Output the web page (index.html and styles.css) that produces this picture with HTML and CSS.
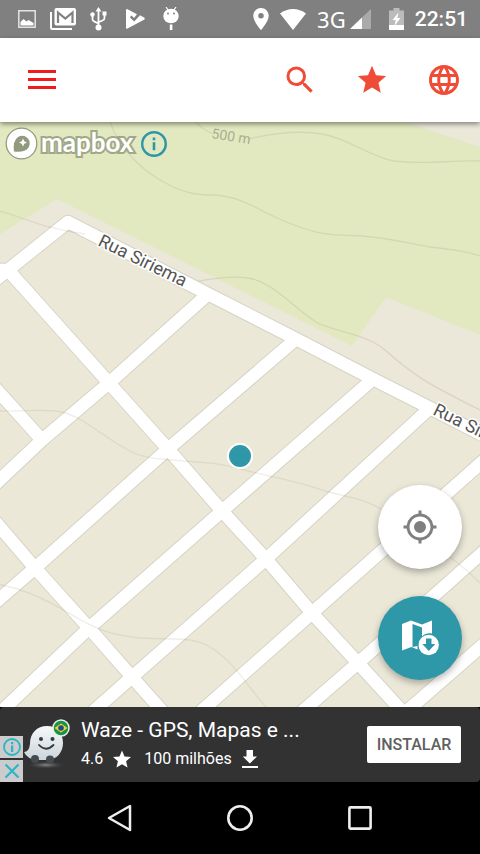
FILE: index.html
```html
<!DOCTYPE html>
<html lang="pt-BR">
<head>
<meta charset="utf-8">
<meta name="viewport" content="width=device-width, initial-scale=1">
<title>Mapa</title>
<link rel="stylesheet" href="styles.css">
</head>
<body>
<div class="status">
  <div class="status-left">
    <span class="slot"><svg width="18" height="18" viewBox="0 0 18 18"><path d="M.8.8h16.4v16.4H.8z" fill="none" stroke="#e4e4e4" stroke-width="1.5"/><path d="M2.500 15.500v-3.500l3-3 3 2.500 2-1.500 5 3v2.500z" fill="#fff"/></svg></span>
    <span class="slot"><svg width="26" height="22" viewBox="0 0 26 22"><path d="M1 4v15.500q0 1.500 1.500 1.500H22" fill="none" stroke="#fff" stroke-width="2"/><rect x="4.500" width="21.500" height="17.500" rx="2" fill="#fff"/><path d="M8 15V4.500l7.300 6 7.200-6V15" fill="none" stroke="#808080" stroke-width="2.200"/></svg></span>
    <span class="slot"><svg width="18" height="24" viewBox="0 0 18 24"><path d="M8.500 3v17M2.500 9v3q0 2 2 2.700l4 1.800M14.500 8v3q0 2-2 2.500l-4 1.800" fill="none" stroke="#fff" stroke-width="1.800"/><path d="M8.500 0l3 4.500h-6zM12.500 4.500h4v4h-4z" fill="#fff"/><circle cx="2.500" cy="7.500" r="2.200" fill="#fff"/><circle cx="8.500" cy="20.500" r="3" fill="#fff"/></svg></span>
    <span class="slot"><svg width="19" height="20" viewBox="0 0 19 20"><path d="M0 1q0-1.500 1.500-.7L11 5.200 8 9 5.500 6.500 3.800 8.200 8.200 12.600 14 6.300 18 8.500q1.600 1.200 0 2.200L1.500 19.500Q0 20.200 0 19z" fill="#fff"/></svg></span>
    <span class="slot"><svg width="16" height="24" viewBox="0 0 16 24"><path d="M3 0l2 3M13 0l-2 3" stroke="#fff" stroke-width="1.200"/><ellipse cx="8" cy="9" rx="7.700" ry="7.300" fill="#fff"/><path d="M6.800 17.500h2.600V23H6.800z" fill="#fff"/><circle cx="5" cy="6.500" r=".9" fill="#777"/><circle cx="11" cy="6.500" r=".9" fill="#777"/></svg></span>
  </div>
  <div class="status-right">
    <svg width="16" height="22" viewBox="5 2 14 20"><path fill="#fff" d="M12 2C8.130 2 5 5.130 5 9c0 5.250 7 13 7 13s7-7.750 7-13c0-3.870-3.130-7-7-7zm0 9.500a2.500 2.500 0 1 1 0-5 2.500 2.500 0 0 1 0 5z"/></svg>
    <svg width="26" height="21" viewBox="0 0 26 21"><path fill="#fff" d="M0 4.500Q6 0 13 0t13 4.500L13 21z"/></svg>
    <span class="net"><span>3G</span><svg width="21" height="20" viewBox="0 0 21 20"><path d="M21 0v20H0z" fill="#aaa"/><path d="M12 8.600V20H0z" fill="#fff"/></svg></span>
    <svg class="battery" width="15" height="22" viewBox="0 0 15 22"><path d="M4.500 0h6v2.500H15V22H0V2.500h4.500z" fill="#bbb"/><path d="M0 17h15v5H0z" fill="#fff"/><path d="M9.500 4.500L3.500 12h3.200L5.500 18l6-8H8.300z" fill="#fff"/></svg>
    <time>22:51</time>
  </div>
</div>

<header class="toolbar">
  <button class="menu" aria-label="Menu"><i></i><i></i><i></i></button>
  <div class="actions">
    <button aria-label="Buscar"><svg width="36" height="36" viewBox="0 0 24 24"><path d="M15.500 14h-.79l-.28-.27A6.471 6.471 0 0 0 16 9.500 6.500 6.500 0 1 0 9.500 16c1.610 0 3.090-.59 4.230-1.570l.27.280v.79l5 4.990L20.490 19l-4.990-5zm-6 0C7.010 14 5 11.990 5 9.500S7.010 5 9.500 5 14 7.010 14 9.500 11.990 14 9.500 14z"/></svg></button>
    <button aria-label="Favoritos"><svg width="34" height="34" viewBox="0 0 24 24"><path d="M12 17.270L18.180 21l-1.640-7.030L22 9.240l-7.190-.61L12 2 9.190 8.630 2 9.240l5.460 4.730L5.820 21z"/></svg></button>
    <button aria-label="Idioma"><svg width="36" height="36" viewBox="0 0 24 24"><path d="M11.990 2C6.470 2 2 6.480 2 12s4.470 10 9.990 10C17.520 22 22 17.520 22 12S17.520 2 11.990 2zm6.930 6h-2.950a15.650 15.650 0 0 0-1.380-3.560A8.030 8.030 0 0 1 18.920 8zM12 4.040c.83 1.200 1.480 2.530 1.910 3.960h-3.820c.43-1.430 1.080-2.760 1.910-3.960zM4.260 14C4.100 13.360 4 12.690 4 12s.1-1.360.26-2h3.380c-.08.66-.14 1.320-.14 2s.06 1.340.14 2H4.260zm.82 2h2.950c.32 1.250.78 2.450 1.380 3.560A7.987 7.987 0 0 1 5.080 16zm2.950-8H5.080a7.987 7.987 0 0 1 4.330-3.560A15.650 15.650 0 0 0 8.030 8zM12 19.960c-.83-1.200-1.480-2.530-1.910-3.960h3.820c-.43 1.430-1.080 2.760-1.910 3.960zM14.340 14H9.660c-.09-.66-.16-1.320-.16-2s.07-1.350.16-2h4.680c.09.65.16 1.320.16 2s-.07 1.340-.16 2zm.25 5.560c.6-1.110 1.060-2.310 1.380-3.560h2.950a8.030 8.030 0 0 1-4.330 3.560zM16.360 14c.08-.66.14-1.320.14-2s-.06-1.340-.14-2h3.380c.16.640.26 1.310.26 2s-.1 1.360-.26 2h-3.380z"/></svg></button>
  </div>
</header>

<main class="map">
  <svg class="map-canvas" viewBox="0 122 480 585" preserveAspectRatio="xMidYMid slice" role="img" aria-label="Mapa">
    <defs>
      <g id="roads">
        <path d="M-10 284L8 270 68 222 208 294 296 339 373 379 430 408 500 444M-10 270H8"/>
        <path d="M8 270L109 383 168 449 222 511 266 559 312 613 358 663 412 722"/>
        <path d="M-12 380L42 440M-12 513L35 568 89 628 132 677 172 722"/>
        <path d="M208 294L109 383 42 440-12 491"/>
        <path d="M296 339L168 449 35 568-12 609"/>
        <path d="M373 379L222 511 89 628-12 724"/>
        <path d="M430 408L266 559 132 677 80 723"/>
        <path d="M500 446L446 494 312 613 190 721"/>
        <path d="M500 537L358 663 290 722"/>
        <path d="M500 630L392 724"/>
      </g>
    </defs>
    <path d="M0 122h480v585H0z" fill="#ebe8d8"/>
    <path d="M0 234L57 199 352 346 386 297 480 337V430L68 222 0 276z" fill="#ebe7d9"/>
    <path d="M405 122h75v24z" fill="#ebe7d9"/>
    <path d="M0 122h405l75 25v188l-94-38-34 49L57 199 0 234z" fill="#e2e9c1"/>
    <g fill="none" stroke="#d3d8b4" stroke-width="1.300">
      <path d="M110 122C118 145 138 168 162 181 186 195 200 195 215 195 240 197 254 207 275 217 310 233 325 235 350 235.500 382 236 405 243 430 247 455 250 465 251 480 256"/>
      <path d="M194 120C201 128 206 131 213 134M248 139C275 133 300 130 322 134 350 139 370 157 394 161 425 165 450 160 480 161"/>
    </g>
    <path d="M188 283C215 278 236 275 253 279 280 287 300 315 320 324 345 334 367 335 385 350 414 376 430 385 480 410" fill="none" stroke="#8c8455" stroke-opacity=".18" stroke-width="1.300"/>
    <use href="#roads" fill="none" stroke="#d6d4c4" stroke-width="14.500" stroke-linejoin="round"/>
    <use href="#roads" fill="none" stroke="#fff" stroke-width="12.500" stroke-linejoin="round"/>
    <g fill="none" stroke="#8c8455" stroke-opacity=".14" stroke-width="1.300">
      <path d="M-5 210C25 217 40 228 85 234"/>
      <path d="M0 411C20 412 45 408 62 412 85 417 108 442 136 454 165 464 205 458 240 469 270 477 292 479 325 491 355 499 368 499 390 515 430 545 455 557 480 583"/>
      <path d="M-5 584C20 587 45 599 67 612S105 635 140 638C175 640 190 636 210 647 235 662 250 690 266 707"/>
    </g>
    <g class="road-label">
      <text transform="translate(97 245) rotate(26)">Rua Siriema</text>
      <text transform="translate(432 414) rotate(26)">Rua Siriema</text>
    </g>
    <text class="contour-label" transform="translate(211 138) rotate(9)">500 m</text>
    <circle cx="240" cy="456" r="12" fill="#2e98a9" stroke="#fff" stroke-width="2"/>
  </svg>

  <div class="attribution">
    <a class="mapbox" href="#"><svg width="33" height="33" viewBox="0 0 33 33"><circle cx="16.500" cy="16.500" r="14.700" fill="#fff" stroke="#919a7d" stroke-width="2.500"/><path d="M9 24.500Q7.500 14 13 10q5.500-3 9.500 1t1 9.500Q19.500 26 9 24.500z" fill="#919a7d"/><path d="M18 11.500l1.300 2.700 2.700 1.300-2.700 1.300L18 19.500l-1.300-2.700-2.700-1.300 2.700-1.300z" fill="#fff"/></svg><span>mapbox</span></a>
    <button class="info" aria-label="Informações"><svg width="28" height="28" viewBox="0 0 28 28"><circle cx="14" cy="14" r="11.800" fill="none" stroke="#2e97a7" stroke-width="2.400"/><path d="M12.700 12.300h2.600v8h-2.600zM12.700 7.500h2.600v2.700h-2.600z" fill="#2e97a7"/></svg></button>
  </div>

  <div class="fabs">
    <button class="fab" aria-label="Minha localização"><svg width="36" height="36" viewBox="0 0 24 24"><path fill="#808080" d="M12 8a4 4 0 1 0 0 8 4 4 0 0 0 0-8zm8.940 3A8.994 8.994 0 0 0 13 3.060V1h-2v2.060A8.994 8.994 0 0 0 3.060 11H1v2h2.060A8.994 8.994 0 0 0 11 20.940V23h2v-2.060A8.994 8.994 0 0 0 20.940 13H23v-2h-2.060zM12 19c-3.870 0-7-3.130-7-7s3.130-7 7-7 7 3.130 7 7-3.130 7-7 7z"/></svg></button>
    <button class="fab fab-teal" aria-label="Baixar mapa"><svg width="38" height="36" viewBox="0 0 38 36"><path d="M1 4l9-3.500 11 4 10-4v13a11 11 0 0 0-10 3V7.500L11.500 4v23l5-1v3.500L10.500 27 1 30.500z" fill="#fff"/><circle cx="27.700" cy="25" r="10.200" fill="#fff"/><path d="M25 18.500h5.500V24h3.800l-6.500 7-6.500-7H25z" fill="#2e98a9"/></svg></button>
  </div>
</main>

<section class="ad">
  <div class="ad-choices">
    <button aria-label="Sobre o anúncio"><svg width="20" height="20" viewBox="0 0 20 20"><circle cx="10" cy="10" r="8" fill="none" stroke="#2bb5c8" stroke-width="1.800"/><path d="M9 8.500h2.200V15H9zM9 5h2.200v2.200H9z" fill="#2bb5c8"/></svg></button>
    <button aria-label="Fechar anúncio"><svg width="20" height="20" viewBox="0 0 20 20"><path d="M3.500 3.500l13 13M16.500 3.500l-13 13" stroke="#2bb5c8" stroke-width="2.200"/></svg></button>
  </div>
  <svg class="ad-logo" width="48" height="52" viewBox="0 0 48 52">
    <defs><linearGradient id="body" x1="0" y1="0" x2="0" y2="1"><stop offset="0" stop-color="#f6f9fa"/><stop offset="1" stop-color="#cbd5da"/></linearGradient>
    <radialGradient id="shade"><stop offset="0" stop-color="#8a8a8a"/><stop offset="1" stop-color="#323232" stop-opacity="0"/></radialGradient></defs>
    <ellipse cx="23" cy="46" rx="20" ry="4" fill="url(#shade)"/>
    <path d="M1 33q5 0 6-8C7 14 14 7 24 7c10 0 16 7 16 17 0 9-6 17-16 17H14Q4 40 1 33z" fill="url(#body)"/>
    <circle cx="12" cy="40" r="4" fill="#454b50"/><circle cx="27" cy="40.500" r="4" fill="#454b50"/>
    <circle cx="18" cy="20" r="2" fill="#343a40"/><circle cx="29.500" cy="20" r="2" fill="#343a40"/>
    <path d="M16 26q7 7.500 14.500 0" fill="none" stroke="#343a40" stroke-width="1.800" stroke-linecap="round"/>
    <circle cx="38" cy="9" r="8" fill="#189447" stroke="#e7efe8" stroke-width="1.500"/><path d="M31.500 9L38 4.500 44.500 9 38 13.500z" fill="#f2d43a"/><circle cx="38" cy="9" r="2.800" fill="#234a86"/>
  </svg>
  <div class="ad-text">
    <h2>Waze - GPS, Mapas e ...</h2>
    <p><span>4.6</span><svg width="18" height="18" viewBox="2 2 20 19"><path fill="#fff" d="M12 17.270L18.180 21l-1.640-7.030L22 9.240l-7.190-.61L12 2 9.190 8.630 2 9.240l5.460 4.730L5.820 21z"/></svg><span class="installs">100 milhões</span><svg width="16" height="18" viewBox="0 0 16 18"><path fill="#fff" d="M4.500 0h6.500v6.500h4L7.800 13.500.8 6.500h3.700zM0 16h16v2H0z"/></svg></p>
  </div>
  <button class="install">INSTALAR</button>
</section>

<nav class="navbar">
  <button aria-label="Voltar"><svg width="28" height="28" viewBox="0 0 28 28"><path d="M24 2v24L3 14z" fill="none" stroke="#eee" stroke-width="2.500" stroke-linejoin="round"/></svg></button>
  <button aria-label="Início"><svg width="28" height="28" viewBox="0 0 28 28"><circle cx="14" cy="14" r="11.700" fill="none" stroke="#eee" stroke-width="2.600"/></svg></button>
  <button aria-label="Recentes"><svg width="28" height="28" viewBox="0 0 28 28"><rect x="3.400" y="3.400" width="21.200" height="21.200" rx="1" fill="none" stroke="#eee" stroke-width="2.600"/></svg></button>
</nav>
</body>
</html>
```

FILE: styles.css
```css
* { box-sizing: border-box; }

body {
  margin: 0;
  min-height: 100vh;
  display: flex;
  flex-direction: column;
  font-family: Roboto, "Liberation Sans", sans-serif;
  background: #000;
}

svg { display: block; flex: none; }

button {
  border: 0;
  padding: 0;
  background: none;
  font: inherit;
  display: flex;
  align-items: center;
  justify-content: center;
  cursor: pointer;
}

.status {
  height: 38px;
  padding: 0 12px 0 9px;
  display: flex;
  align-items: center;
  justify-content: space-between;
  background: #808080;
  color: #fff;
}

.status-left,
.status-right,
.net {
  display: flex;
  align-items: center;
}

.slot {
  width: 36px;
  display: flex;
  justify-content: center;
}

.status-right { gap: 11px; }

.net {
  gap: 4px;
  font-family: "Noto Sans", sans-serif;
  font-size: 22px;
  line-height: 38px;
}

.battery { margin-left: 7px; }

time {
  font-size: 21px;
  font-weight: 500;
  line-height: 38px;
}

.toolbar {
  position: relative;
  z-index: 1;
  height: 84px;
  display: flex;
  justify-content: space-between;
  background: #fff;
  box-shadow: 0 2px 5px rgba(0, 0, 0, 0.45);
}

.menu {
  width: 84px;
  padding-bottom: 2px;
  flex-direction: column;
  gap: 5px;
}

.menu i {
  width: 28px;
  height: 3px;
  background: #f01c1c;
}

.actions { display: flex; }

.actions button { width: 72px; }

.actions svg { fill: #f04b37; }

.map {
  position: relative;
  flex: 1;
  min-height: 320px;
  overflow: hidden;
  background: #ebe8d8;
}

.map-canvas {
  position: absolute;
  inset: 0;
  width: 100%;
  height: 100%;
}

.road-label {
  font-size: 18px;
  fill: #555;
  stroke: #fff;
  stroke-width: 3px;
  paint-order: stroke;
}

.contour-label {
  font-size: 14px;
  fill: #a9ae90;
}

.attribution {
  position: absolute;
  top: 5px;
  left: 5px;
  display: flex;
  align-items: center;
  gap: 7px;
}

.mapbox {
  display: flex;
  align-items: center;
  gap: 3px;
  color: #fff;
  text-decoration: none;
  font-family: Lato, sans-serif;
  font-size: 26px;
  font-weight: 700;
  line-height: 30px;
  -webkit-text-stroke: 4px #a0a887;
  paint-order: stroke fill;
}

.mapbox span { padding-bottom: 3px; }

.fabs {
  position: absolute;
  right: 18px;
  bottom: 27px;
  display: flex;
  flex-direction: column;
  gap: 27px;
}

.fab {
  width: 84px;
  height: 84px;
  border-radius: 50%;
  background: #fff;
  box-shadow: 0 3px 7px rgba(0, 0, 0, 0.3);
}

.fab-teal { background: #2e98a9; }

.ad {
  height: 75px;
  padding-right: 19px;
  display: flex;
  align-items: center;
  border-radius: 4px;
  background: #323232;
  color: #fff;
}

.ad-choices {
  align-self: flex-end;
  display: flex;
  flex-direction: column;
  gap: 2px;
}

.ad-choices button {
  width: 23px;
  height: 22px;
  background: #ccc;
}

.ad-text {
  flex: 1;
  min-width: 0;
  padding: 0 0 2px 10px;
}

.ad-text h2 {
  margin: 0;
  font-size: 21px;
  font-weight: 400;
  line-height: 30px;
  white-space: nowrap;
}

.ad-text p {
  margin: 0;
  display: flex;
  align-items: center;
  gap: 10px;
  font-size: 16px;
  line-height: 28px;
}

.installs { padding-left: 3px; }

.install {
  width: 94px;
  height: 37px;
  border-radius: 2px;
  background: #fff;
  color: #606060;
  font-size: 16px;
  font-weight: 500;
}

.navbar {
  height: 72px;
  display: flex;
  justify-content: center;
  gap: 36px;
}

.navbar button { width: 84px; }
```
